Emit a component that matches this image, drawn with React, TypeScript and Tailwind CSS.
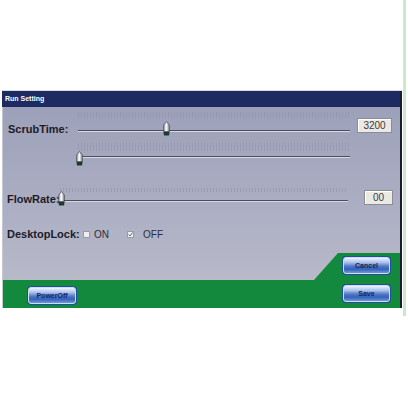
import React from "react";

function Thumb({ h = 15 }: { h?: number }) {
  return (
    <svg width="7" height={h} viewBox="0 0 7 15" className="block" preserveAspectRatio="none">
      <defs>
        <linearGradient id="tg" x1="0" x2="1" y1="0" y2="0">
          <stop offset="0" stopColor="#9aa0a8" />
          <stop offset="0.45" stopColor="#ffffff" />
          <stop offset="1" stopColor="#8a9098" />
        </linearGradient>
      </defs>
      <path d="M3.5 0.5 L6.3 4 L6.3 11 L0.7 11 L0.7 4 Z" fill="url(#tg)" stroke="#3a3f48" strokeWidth="0.7" />
      <rect x="0.7" y="10.5" width="5.6" height="4" rx="1" fill="#1c3a2c" />
    </svg>
  );
}

interface SliderProps {
  width: number;
  value: number;
  tickH: number;
  trackGap: number;
  thumbTop: number;
}

function Slider({ width, value, tickH, trackGap, thumbTop }: SliderProps) {
  return (
    <div className="relative shrink-0" style={{ width }}>
      <div
        className="w-full bg-[repeating-linear-gradient(90deg,#8e92ab_0_1px,transparent_1px_3px)] opacity-60"
        style={{ height: tickH }}
      />
      <div style={{ height: trackGap }} />
      <div className="h-[1px] w-full bg-[#4a4d5e]" />
      <div className="h-[1px] w-full bg-[#d6d8e2]" />
      <div className="absolute" style={{ left: `calc(${value}% - 3px)`, top: thumbTop }}>
        <Thumb />
      </div>
    </div>
  );
}

function ValueBox({ children, w }: { children: React.ReactNode; w: number }) {
  return (
    <div
      className="h-[15px] shrink-0 bg-[#ebe9e3] border border-[#8c8c94] shadow-[inset_1px_1px_0_#ffffff] flex items-center justify-center text-[10px] leading-none text-[#3a3a44] font-['Liberation_Sans',sans-serif]"
      style={{ width: w }}
    >
      {children}
    </div>
  );
}

function Btn({ label, w }: { label: string; w: number }) {
  return (
    <button
      className="block h-[17px] rounded-[3px] border border-[#cfdcf4] bg-[linear-gradient(to_bottom,#eef3fd_0%,#a9c0ea_30%,#4f78c6_55%,#3562b8_75%,#6f98de_100%)] shadow-[0_0_0_1px_#1d4f9a] text-[7px] font-bold leading-none text-[#14245a] font-['Liberation_Sans',sans-serif]"
      style={{ width: w }}
    >
      {label}
    </button>
  );
}

function Check({ checked }: { checked?: boolean }) {
  return (
    <span className="relative w-[7px] h-[7px] bg-[#eeeef2] border border-[#9a9aa6] inline-block">
      {checked && (
        <svg width="7" height="7" viewBox="0 0 7 7" className="absolute -left-[1px] -top-[1px]">
          <path d="M1.5 3.5 L3 5 L5.5 1.5" fill="none" stroke="#6a6a78" strokeWidth="1" />
        </svg>
      )}
    </span>
  );
}

export default function App() {
  const label = "text-[11px] font-bold leading-[12px] text-[#1c1c28] font-['Liberation_Sans',sans-serif]";
  return (
    <div className="w-[408px] h-[400px] bg-white flex font-['Liberation_Sans',sans-serif]">
      <div className="w-[403px] shrink-0">
        <div className="h-[90px] bg-white" />
        <div className="h-[1px] bg-[#d8dae4] ml-[2px] w-[400px]" />
        <div className="ml-[2px] w-[400px] border-r-[2px] border-[#1a1d2e]">
          <div className="h-[16px] bg-[#1e2a62] flex items-center pl-[3px] text-[7px] font-bold text-white">
            Run Setting
          </div>
          <div className="bg-[linear-gradient(to_bottom,#9ca0b9,#acafc3_50%,#bcbdcb)] border-l border-[#c4c6d2]">
            <div className="h-[146px] pt-[5px]">
              {/* ScrubTime */}
              <div className="flex items-start h-[26px]">
                <div className={`w-[75px] shrink-0 pl-[5px] mt-[11px] ${label}`}>ScrubTime:</div>
                <Slider width={272} value={32.5} tickH={6} trackGap={12} thumbTop={9} />
                <div className="ml-[7px] mt-[6px]">
                  <ValueBox w={35}>3200</ValueBox>
                </div>
              </div>
              {/* second slider */}
              <div className="flex items-start h-[24px] mt-[5px]">
                <div className="w-[75px] shrink-0" />
                <Slider width={272} value={0.5} tickH={8} trackGap={5} thumbTop={8} />
              </div>
              {/* FlowRate */}
              <div className="flex items-start h-[22px] mt-[21px]">
                <div className={`w-[57px] shrink-0 pl-[4px] mt-[5px] whitespace-nowrap ${label}`}>FlowRate:</div>
                <Slider width={288} value={0.5} tickH={4} trackGap={8} thumbTop={3} />
                <div className="ml-[16px] mt-[2px]">
                  <ValueBox w={29}>00</ValueBox>
                </div>
              </div>
              {/* DesktopLock */}
              <div className="flex items-center h-[14px] mt-[17px]">
                <div className={`w-[80px] shrink-0 pl-[4px] ${label}`}>DesktopLock:</div>
                <Check />
                <span className="ml-[4px] text-[10px] text-[#2c2c3a]">ON</span>
                <span className="ml-[18px] flex">
                  <Check checked />
                </span>
                <span className="ml-[9px] text-[10px] text-[#2c2c3a]">OFF</span>
              </div>
            </div>
            {/* footer */}
            <div className="relative h-[55px]">
              <div className="absolute inset-0 bg-[#12893d] [clip-path:polygon(0_27px,311px_27px,335px_0,100%_0,100%_100%,0_100%)]" />
              <div className="relative flex h-full">
                <div className="pl-[25px] pt-[34px] flex items-start">
                  <Btn label="PowerOff" w={48} />
                </div>
                <div className="ml-auto mr-[10px] pt-[4px] flex flex-col gap-[11px]">
                  <Btn label="Cancel" w={47} />
                  <Btn label="Save" w={47} />
                </div>
              </div>
            </div>
          </div>
        </div>
      </div>
      <div className="w-[3px] h-[316px] bg-[#cbe8cf]" />
    </div>
  );
}
